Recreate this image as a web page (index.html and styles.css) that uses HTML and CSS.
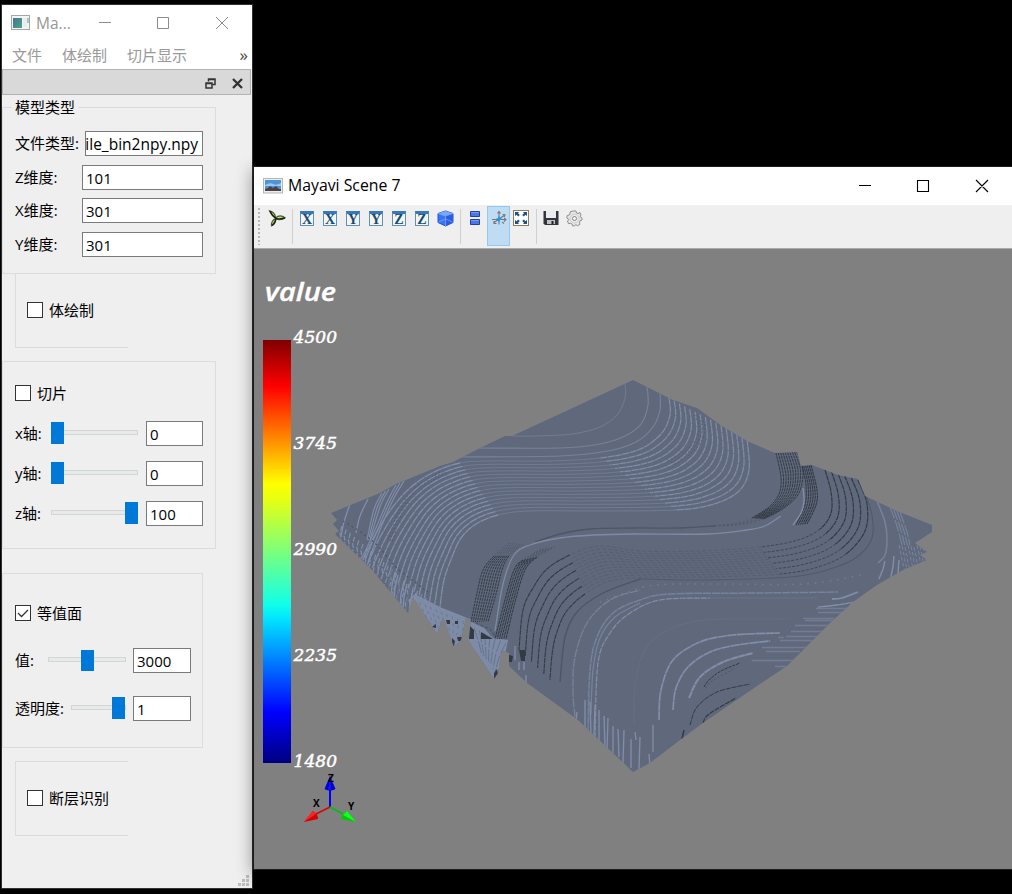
FILE: index.html
```html
<!DOCTYPE html>
<html lang="zh-CN">
<head>
<meta charset="utf-8">
<title>Mayavi Scene 7</title>
<link rel="stylesheet" href="styles.css">
</head>
<body>
<main class="desktop">
  <section class="window controls">
    <header class="titlebar inactive">
      <svg class="app-icon" width="20" height="16" viewBox="0 0 20 16"><defs><linearGradient id="appg" x1="0" y1="0" x2="1" y2="1"><stop offset="0" stop-color="#46739d"/><stop offset="1" stop-color="#4fa57c"/></linearGradient></defs><rect x=".5" y=".5" width="18" height="14" fill="#f4f4f4" stroke="#a3a7a9"/><rect x="2" y="3" width="9" height="10" fill="url(#appg)"/><path d="M13 3v9M15 3v9" stroke="#dde6e6"/><path d="M17 3v5" stroke="#5a9a91"/></svg>
      <span class="title">Ma...</span>
      <svg class="sys" width="132" height="14" viewBox="0 0 132 14"><path d="M1 6.5h12M59.500 1.500h11v11h-11zM118 1l12 12M130 1l-12 12" fill="none" stroke="#8b8b8b"/></svg>
    </header>
    <nav class="menu"><span>文件</span><span>体绘制</span><span>切片显示</span><b>»</b></nav>
    <div class="dock-title">
      <svg width="11" height="11" viewBox="0 0 11 11"><path d="M3.500 3.500V1h6.500v5.500H7.500M3 1.500h7" fill="none" stroke="#333" stroke-width="1.500"/><path d="M1 5h6v5H1zM1 5.500h6" fill="none" stroke="#333" stroke-width="1.500"/></svg>
      <svg width="11" height="11" viewBox="0 0 11 11"><path d="M1 1l9 9M10 1l-9 9" stroke="#333" stroke-width="2.300"/></svg>
    </div>
    <div class="panel">
      <div class="group model">
        <span class="legend">模型类型</span>
        <div class="row"><label>文件类型:</label><div class="input file"><span>file_bin2npy.npy</span></div></div>
        <div class="row"><label>Z维度:</label><div class="input dim">101</div></div>
        <div class="row"><label>X维度:</label><div class="input dim">301</div></div>
        <div class="row"><label>Y维度:</label><div class="input dim">301</div></div>
      </div>
      <div class="group side volume"><div class="check"><i></i>体绘制</div></div>
      <div class="group slices">
        <div class="check"><i></i>切片</div>
        <div class="row"><label>x轴:</label><div class="slider axis"><i></i></div><div class="input small">0</div></div>
        <div class="row"><label>y轴:</label><div class="slider axis"><i></i></div><div class="input small">0</div></div>
        <div class="row"><label>z轴:</label><div class="slider axis end"><i></i></div><div class="input small">100</div></div>
      </div>
      <div class="group iso">
        <div class="check"><i><svg width="14" height="14" viewBox="0 0 14 14"><path d="M2 7l3.500 3.500L12 4" fill="none" stroke="#333" stroke-width="1.300"/></svg></i>等值面</div>
        <div class="row"><label>值:</label><div class="slider value"><i></i></div><div class="input medium">3000</div></div>
        <div class="row"><label>透明度:</label><div class="slider alpha"><i></i></div><div class="input medium">1</div></div>
      </div>
      <div class="group side fault"><div class="check"><i></i>断层识别</div></div>
    </div>
    <svg class="grip" width="12" height="12" viewBox="0 0 12 12"><path d="M8 0h3v3H8zM4 4h3v3H4zM8 4h3v3H8zM0 8h3v3H0zM4 8h3v3H4zM8 8h3v3H8z" fill="#bdbdbd"/></svg>
  </section>

  <section class="window scene">
    <header class="titlebar">
      <svg class="app-icon" width="20" height="16" viewBox="0 0 20 16"><rect x=".5" y=".5" width="19" height="14.500" fill="#eee" stroke="#b5b5b5"/><rect x="2" y="2" width="16" height="11" fill="#4d94d8"/><path d="M2 7q5-3 8-1t8-1v3H2z" fill="#9dc8ec"/><path d="M2 13v-2l3-1 2-2 3 2 3-2 3 3 2 0v2z" fill="#4c4242"/></svg>
      <span class="title">Mayavi Scene 7</span>
      <svg class="sys" width="132" height="14" viewBox="0 0 132 14"><path d="M1 6.500h12M59.500 1.500h11v11h-11zM118 1l12 12M130 1l-12 12" fill="none" stroke="#000" stroke-width="1.100"/></svg>
    </header>
    <div class="toolbar">
      <div class="handle"></div>
      <div class="tool"><svg width="18" height="17" viewBox="0 0 18 17"><path d="M1.500 .8Q7 2 7.500 7.500 4 6 1.500.8zM7.500 8Q12 4 17 7.800 12 11 7.500 8.500zM7.500 8.500Q8 14 3.500 15.800 3 11 7.500 8.500z" fill="#c9d67a" stroke="#46592c" stroke-width="1.200"/><path d="M2 1Q4 6 8 8.300 12 9.500 17 8M8 8q0 4-4 7.500" fill="none" stroke="#192217" stroke-width="1.400"/></svg></div>
      <div class="sep"></div>
      <div class="tool"><span class="axis-icon">X</span></div>
      <div class="tool"><span class="axis-icon">X</span></div>
      <div class="tool"><span class="axis-icon">Y</span></div>
      <div class="tool"><span class="axis-icon">Y</span></div>
      <div class="tool"><span class="axis-icon">Z</span></div>
      <div class="tool"><span class="axis-icon">Z</span></div>
      <div class="tool"><svg width="17" height="17" viewBox="0 0 17 17"><path d="M1 3.500L8.500 1 16 3.500V12.500L8.500 16 1 12.500z" fill="#3974f2" stroke="#2356cf"/><path d="M1 3.500L8.500 1 16 3.500 8.500 6z" fill="#7da8ff"/><path d="M8.500 6L16 3.500V12.500L8.500 16z" fill="#2c5ddd"/><path d="M8.500 6v10M1 3.500L8.500 6 16 3.500M1.500 12L8.500 9l7 3" fill="none" stroke="#82a9ff" stroke-width=".7"/></svg></div>
      <div class="sep"></div>
      <div class="tool"><svg width="16" height="16" viewBox="0 0 16 16"><path d="M3.500 1.500h9v5h-9zM3.500 9.500h9v5h-9z" fill="#4778e4" stroke="#203fa2"/><path d="M4 2.500h8M4 10.500h8" stroke="#739cf5"/></svg></div>
      <div class="tool active"><svg width="16" height="16" viewBox="0 0 16 16"><path d="M8 14.500V2M6.500 3.500L8 1.500l1.500 2M2.500 13L13 5.500M1 9.500h14M11.500 4.500l2.500.3-.8 2.200M3 11v2.500h2.500M13 8l2 1.500-2 2M11 12l2 1.500" fill="none" stroke="#77797a" stroke-width="1.100"/><path d="M8 5.500l1 2.500 2.500 1-2.500 1-1 2.500L7 10 4.500 9 7 8z" fill="#1d97f4"/></svg></div>
      <div class="tool"><svg width="16" height="16" viewBox="0 0 16 16"><rect x=".5" y=".5" width="15" height="15" fill="#fff" stroke="#8a7d62"/><path d="M2 2h4L5 3.300l1.800 1.700L5.200 6.500l-1.700-1.700L2 6zM14 2v4l-1.500-1.200-1.700 1.700L9.200 5 11 3.300 10 2zM2 14v-4l1.500 1.200 1.700-1.700L6.800 11 5 12.700 6 14zM14 14h-4l1-1.300L9.200 11l1.600-1.500 1.700 1.700L14 10z" fill="#1e5286"/></svg></div>
      <div class="sep"></div>
      <div class="tool"><svg width="16" height="16" viewBox="0 0 16 16"><path d="M.5 1h15v14H2L.5 13.500z" fill="#34343b"/><path d="M3 1h10v7H3z" fill="#e9edf2"/><path d="M4 10h8v4H4z" fill="#bcc2c8"/><path d="M8.500 11h2v3h-2z" fill="#222"/></svg></div>
      <div class="tool"><svg width="17" height="17" viewBox="0 0 17 17"><path d="M7 1h3l.5 2 1.500.6L14 2.500 15 5l-1 1.500L16 8v2l-2 .8-.5 1.500.5 2-2.500 1.500-1.800-1.300L8.500 16l-2-.2L6 14l-1.500-.6-2 .3L1.500 11 3 9.500.8 8 1.200 5.500l2-.4L4 4 4 2l2-.7z" fill="#e7e7e7" stroke="#8f8f8f"/><circle cx="8.500" cy="8.500" r="2" fill="#f4f4f4" stroke="#888"/><circle cx="8.500" cy="8.500" r="4.500" fill="none" stroke="#cfcfcf"/></svg></div>
    </div>
    <div class="viewport">
      <svg id="view" width="758" height="620" viewBox="254 249 758 620">
        <defs>
          <clipPath id="outline"><path d="M633 380L647 387 673 400 697 408 722 426 747 441 775 453 797 452 801 466 812 465 838 475 858 479 865 496 897 511 932 525 932 532 915 543 927 552 920 555 927 560 903 570 877 585 853 602 830 623 787 666 757 686 703 723 680 740 650 763 633 772 578 720 527 683 509 666 509 653 502 650 498 673 494 679 468 640 471 621 466 618 461 640 454 647 443 617 437 634 413 597 408 613 372 570 335 534 339 531 333 524 337 520 331 513 380 493 396 484 440 466 453 462 480 448 505 436 512 436z"/></clipPath>
          <linearGradient id="jet" x1="0" y1="0" x2="0" y2="1"><stop offset="0" stop-color="#800000"/><stop offset=".11" stop-color="#f00"/><stop offset=".34" stop-color="#ff0"/><stop offset=".375" stop-color="#e8ff10"/><stop offset=".625" stop-color="#10ffe8"/><stop offset=".66" stop-color="#00e4ff"/><stop offset=".88" stop-color="#00f"/><stop offset="1" stop-color="#000080"/></linearGradient>
        </defs>
        <g clip-path="url(#outline)"><rect x="320" y="370" width="630" height="410" fill="#60697c"/><path d="M408 600L415 594 440 607 470 619 472 622 484 628 493 638 508 640 505 655 494 680 460 650 420 630z" fill="#7e8ba7"/><g id="contours" fill="none"></g></g>
        <rect x="263" y="340" width="28" height="423" fill="url(#jet)"/>
        <text class="bar-title" x="265" y="301" textLength="71" lengthAdjust="spacingAndGlyphs">value</text>
        <g class="bar-label"><text x="293.500" y="343" textLength="43.500">4500</text><text x="293.500" y="449" textLength="43.500">3745</text><text x="293.500" y="555" textLength="43.500">2990</text><text x="293.500" y="661" textLength="43.500">2235</text><text x="293.500" y="767" textLength="43.500">1480</text></g>
        <path d="M330 807V789" stroke="#00f" stroke-width="2"/><path d="M330 807L316 814" stroke="#e00000" stroke-width="1.500"/><path d="M330 807L343 814" stroke="#00c000" stroke-width="1.500"/>
        <path d="M330 776L335.500 789q-5.500 3.500-11 0z" fill="#00c"/><path d="M330 776L331 790h-3z" fill="#11f"/>
        <path d="M304 822L313 811q5 3 5 8z" fill="#d80000"/><path d="M304 822L313 811l3 3z" fill="#f22"/>
        <path d="M356 822L347 811q-5 3-6 8z" fill="#00c900"/><path d="M356 822L347 811l-4 4z" fill="#1f2"/>
        <g class="axis-label"><text x="328" y="782">Z</text><text x="313" y="807">X</text><text x="348" y="810">Y</text></g>
      </svg>
    </div>
  </section>
</main>
<script src="surface.js"></script>
</body>
</html>
```
FILE: surface.js
```js
const layer = document.getElementById('contours');
const LIGHT = '#818eaa', MID = '#75829b', DARK = '#323a44', DIM = '#4d5665';

// Catmull-Rom spline through points from..to, as a path string.
function spline(p, from = 0, to = p.length - 1) {
  let d = `M${p[from]}`;
  for (let i = from; i < to; i++) {
    const a = p[i - 1] || p[i], b = p[i], c = p[i + 1], e = p[i + 2] || c;
    d += `C${b[0] + (c[0] - a[0]) / 6} ${b[1] + (c[1] - a[1]) / 6} ${c[0] - (e[0] - b[0]) / 6} ${c[1] - (e[1] - b[1]) / 6} ${c}`;
  }
  return d;
}
function draw(d, color, width = 1.2, dash = '', opacity = 1, fill = 'none') {
  const el = document.createElementNS('http://www.w3.org/2000/svg', 'path');
  el.setAttribute('d', d);
  el.setAttribute('stroke', color);
  el.setAttribute('stroke-width', width);
  el.setAttribute('stroke-dasharray', dash);
  el.setAttribute('opacity', opacity);
  el.setAttribute('fill', fill);
  layer.append(el);
}
const pts = s => s.split(' ').map(v => v.split(',').map(Number));
const curve = (s, ...style) => draw(spline(pts(s)), ...style);
// n point lists evenly spread from curve a to curve b.
function between(a, b, n) {
  const p = pts(a), q = pts(b);
  return Array.from({ length: n }, (_, i) => {
    const t = n > 1 ? i / (n - 1) : 0;
    return p.map((v, k) => [v[0] + (q[k][0] - v[0]) * t, v[1] + (q[k][1] - v[1]) * t]);
  });
}
const family = (a, b, n, ...style) => between(a, b, n).forEach(p => draw(spline(p), ...style));

// Upper light contours
curve('625,383 625,398 617,415 600,427 572,434 535,436 512,436', MID, 1, '', .8);
curve('647,386 648,405 641,424 625,436 600,444 560,448 475,448', MID, 1.2);
curve('660,393 660,410 653,427 636,442 608,451 560,456 450,457', MID, 1.2);
between('669,398 670,415 661,434 638,450 600,458 550,461 490,461 460,463 432,473 410,488 392,508 375,535 362,562',
        '747,439 749,470 739,491 714,504 675,510 600,511 530,511 498,515 476,524 461,538 452,557 444,580 440,607', 16)
  .forEach(p => {
    draw(spline(p, 4, 7), MID, 1, '', .75);
    draw(spline(p, 0, 4), LIGHT, 1.25, '7 .6', .95);
    draw(spline(p, 7, 12), LIGHT, 1.3, '9 .6');
  });
family('695,415 699,430 690,447 666,462', '702,417 705,431 696,449 672,466', 3, DIM, .9, '1.500 2.500', .8);
family('396,485 388,500 375,530 362,558', '404,481 393,500 380,530 368,562', 3, LIGHT, 1.1);
curve('350,504 344,522 341,537', LIGHT, 1.3);
curve('368,499 360,516 356,533', LIGHT, 1.3);
family('382,493 374,509 367,540', '389,489 380,507 370,540', 3, LIGHT, 1.1);
family('440,472 416,487 400,508 388,540', '446,473 424,487 404,509 392,543', 3, DIM, .8, '2 2', .8);
curve('343,521 362,533 379,547 397,568 428,592', DIM, 1.2, '2 3');

// Ragged left edge
for (let i = 0; i < 23; i++) {
  const x = 342 + i * 4.2, y = 526 + i * 3.6;
  draw(`M${x} ${y}l-2 7l1 5l-3 8l1 5l-3 10`, LIGHT, 1.25, '5 1.5');
}
for (let i = 0; i < 9; i++) draw(`M${392 + i * 3} ${569 + i * 3}l-3 13l-2 26`, i % 3 ? LIGHT : '#687389', 1.4);
family('414,600 420,612 428,624', '463,621 463,628 460,637', 10, '#6c7990', 1, '3 4');
family('474,628 478,640 482,655', '506,643 500,655 495,672', 7, '#66738a', 1, '12 2');
draw('M432 627l4-3v4zM446 620h4v4h-3zM455 621h3v3h-3zM452 638l3 3-1 5h-2zM457 637h5v4h-4z', 'none', 0, '', 1, DARK);
draw('M470 626l4 4v9h-5zM481 632l12 7h-12zM509 655l4 1-1 6h-3zM519 650h6v11h-4zM494 673l3-4 1 6-4 4z', 'none', 0, '', 1, DARK);

// Dark bands
family('776,453 781,477 779,494 769,507 752,518', '797,452 803,470 799,493 784,508 764,519', 10, DARK, 1, '3 .6');
family('752,518 738,523 710,526', '764,519 745,524 722,526', 4, DIM, .8, '2 2', .8);
curve('715,526 680,528 633,528 590,529 560,534 535,542', DIM, 1.3);
family('802,466 806,485 805,505 796,525', '811,465 817,490 816,505 807,524', 6, DARK, 1.1, '3 .5');
curve('803,488 804,501 801,513 793,525', LIGHT, 1.4);
curve('781,516 765,526 747,530 707,534 633,534 593,535 560,538 530,545 514,555 503,584 495,631', LIGHT, 1.3, '', .9);
between('509,543 494,556 483,570 477,593 471,622', '524,545 509,556 502,570 496,594 488,622', 9)
  .forEach(p => {
    draw(spline(p, 0, 1), DIM, .9, '1.500 2');
    draw(spline(p, 1, 4), DARK, 1, '2.500 .8');
  });
between('541,549 523,560 514,570 505,600 495,639', '555,547 537,557 525,570 515,602 506,639', 6)
  .forEach(p => {
    draw(spline(p, 0, 1), DIM, .9, '2 1.500');
    draw(spline(p, 1, 4), DARK, 1.05, '3 .7');
  });
draw('M476 623l14 6 6 8', '#4e5868', 1.5, '3 2');

// Central dark contours: strong on both flanks, faint across the flat
const coreIn = '825,470 831,492 831,513 820,529 798,540 760,547 700,551 640,551 600,546 570,555 547,569 533,588 523,610 519,650';
const coreOut = '858,480 867,504 865,531 846,554 818,567 780,574 710,577 650,577 610,581 585,594 566,612 556,635 552,655 550,680';
between(coreIn, coreOut, 6).forEach(p => {
  draw(spline(p, 0, 3), DARK, 1.2, '5 .6');
  draw(spline(p, 3, 5), DARK, .9, '3 1.500', .8);
  draw(spline(p, 9, 13), DARK, 1.1, '5 .6');
});
between(coreIn, coreOut, 12).forEach(p => draw(spline(p, 5, 9), DIM, .8, '4 2', .65));
curve('865,493 872,515 872,538 857,557 830,569 790,577 700,580 640,579', DIM, 1.1, '', .8);
curve('640,579 603,593 577,612 565,637 560,682', DIM, 1.4);

// Lower light contours
curve('575,717 573,690 575,657 587,623 610,600 640,590', MID, 1.3, '9 1');
curve('600,602 625,593 655,585 720,584 805,584 862,575', MID, 1.5, '1.5 6', .8);
curve('588,733 590,670 597,637 613,613 640,600 670,594 760,593 838,592', MID, 1.5, '8 .8');
curve('591,715 593,670 600,638 615,617 640,603', MID, 1.3);
curve('595,738 598,663 610,633 630,613 660,600 710,598', LIGHT, 1.2, '6 1');
curve('710,598 817,598', MID, .7, '', .6);
curve('659,720 661,690 673,660 700,642 733,635 780,633', LIGHT, 1.7, '9 .5');
curve('673,710 676,688 688,667 710,652 737,645 770,641', LIGHT, 1.7, '9 .5');
curve('689,698 700,677 723,662 753,653', LIGHT, 2, '7 .5');
curve('634,725 635,685 645,650 666,631 705,620 790,619', '#647085', 1);
curve('704,687 709,680 721,671 740,663', DARK, 1, '3 1');
curve('706,688 712,681 734,669', DIM, .9, '2 2');
curve('690,725 697,707 717,692 750,684', DARK, 1, '5 1');
curve('703,723 709,714 736,698', DARK, 1.2, '5 1');
draw('M682 739l2-9', DARK, 1.5);
// Short horizontal ledges: start x, end x, y
[[752,795,660],[775,790,666],[766,800,651],[762,808,647],[778,784,637],[786,820,636],[780,812,640],[791,832,631],[795,838,625],[803,834,618],[805,842,620],[818,850,612],[816,855,608]].forEach(([a, b, y]) => draw(`M${a} ${y + .5}H${b}`, '#707d95', 1.3));
curve('832,599 842,598 858,592', LIGHT, 1.8);
curve('818,607 837,605 855,602', LIGHT, 1.4);

// Right tip
curve('877,501 885,522 887,540 885,555 878,563', MID, 1.6);
family('890,507 897,526 902,545', '900,512 907,532 910,545', 4, MID, 1.2, '12 2');
for (let i = 0; i < 10; i++) draw(`M${899 + i * 3} ${545 + i % 3}l2 9l1 7l3 9`, MID, 1.1, '4 2');
draw('M885 561l-2 8l-4 10M894 556l-1 11l-3 14M899 560l-1 14', LIGHT, 1.4);

// Bottom edge teeth: x, top, bottom
[[577,712,722],[585,700,727],[590,702,734],[595,705,736],[599,710,742],[604,716,746],[608,718,750],[613,726,753],[618,729,757],[624,730,763],[631,739,768],[635,732,740],[640,737,769],[653,725,752],[649,754,766]].forEach(([x, a, b], i) => draw(`M${x} ${a}L${x + (i % 3 - 1)} ${b}`, LIGHT, 1.3));
draw('M515 646v14M519 662v8M526 675v9M524 662v8', LIGHT, 1.3);
```
FILE: styles.css
```css
* { box-sizing: border-box; }
body { margin: 0; background: #000; font: 15px/20px "Open Sans", "Noto Sans CJK SC", sans-serif; color: #000; }
svg { display: block; flex: none; }
.desktop { position: relative; width: 1012px; height: 894px; overflow: hidden; background: #000; }
.window { position: absolute; }
.controls { left: 1px; top: 4px; width: 252px; height: 885px; border: 1px solid #303030; background: #efefef; display: flex; flex-direction: column; }
.scene { left: 254px; top: 167px; width: 758px; height: 702px; background: #efefef; box-shadow: 0 0 0 1px #1b1b1b, 0 4px 16px 1px rgba(0, 0, 0, .42); display: flex; flex-direction: column; }
.titlebar { height: 38px; background: #fff; display: flex; align-items: center; padding-left: 9px; font-size: 15.8px; flex: none; }
.title { margin-left: 5px; margin-top: -2px; }
.sys { margin-left: auto; margin-right: 22px; }
.inactive { color: #969696; height: 36px; }
.inactive .title { font-size: 15.5px; margin-top: 0; }
.inactive .sys { margin-right: 22px; }
.menu { height: 28px; background: #fff; color: #999; display: flex; align-items: center; gap: 20px; padding: 0 4px 0 10px; flex: none; }
.menu b { margin-left: auto; color: #444; font-weight: 400; font-size: 17px; }
.dock-title { height: 26px; flex: none; border: 1px solid #b3b3b3; background: #d9d9d9; display: flex; align-items: center; justify-content: flex-end; gap: 16px; padding: 2px 7px 0 0; margin: 0 1px 1px 0; }
.panel { display: flex; flex-direction: column; align-items: flex-start; padding-top: 11px; }
.group { position: relative; border: 1px solid #dcdcdc; display: flex; flex-direction: column; }
.legend { position: absolute; left: 9px; top: -11px; padding: 0 3px; background: #efefef; line-height: 20px; }
.row { display: flex; align-items: center; justify-content: space-between; height: 25px; flex: none; }
.row label { margin-top: -1px; }
.input { height: 25px; border: 1px solid #7a7a7a; background: #fff; padding: 2px 0 0 3px; line-height: 21px; overflow: hidden; white-space: nowrap; }
.file { width: 118px; padding: 2px 4px 0 0; display: flex; justify-content: flex-end; font-size: 15.5px; }
.dim { width: 121px; }
.small { width: 57px; }
.medium { width: 58px; }
.model { width: 214px; height: 167px; padding: 23px 12px 0 12px; gap: 8.67px; }
.side { margin-left: 13px; width: 113px; border-right: 0; padding-left: 11px; justify-content: center; }
.volume { height: 75px; border-top: 0; margin-top: -1px; }
.check { display: flex; align-items: center; gap: 6px; height: 20px; flex: none; }
.check i { width: 16px; height: 16px; border: 1px solid #333; background: #fff; }
.slices { margin-top: 13px; width: 214px; height: 188px; padding: 21px 12px 0 12px; }
.slices .row { margin-top: 15px; }
.slices .check + .row { margin-top: 18px; }
.slider { position: relative; height: 5px; background: #e7eaea; border: 1px solid #d4d6d6; margin-top: -3px; margin-left: auto; margin-right: 8px; }
.slider i { position: absolute; top: -9px; left: -1px; width: 13px; height: 22px; background: #0078d7; }
.axis { width: 87px; }
.end i { left: auto; right: -1px; }
.value { width: 78px; }
.value i { left: 32px; height: 21px; top: -8px; }
.alpha { width: 55px; }
.alpha i { left: 40px; }
.iso .slider { margin-right: 7px; }
.iso { margin-top: 24px; width: 201px; height: 175px; padding: 29px 11px 0 12px; }
.iso .check + .row { margin-top: 25px; }
.iso .row + .row { margin-top: 23px; }
.fault { margin-top: 13px; height: 75px; padding-bottom: 1px; }
.grip { position: absolute; right: 2px; bottom: 1px; }
.toolbar { height: 44px; display: flex; border-bottom: 1px solid #aaa; background: #efefef; padding: 1px 0 0 4px; flex: none; }
.handle { width: 2px; height: 37px; margin: 2px 6px 0 0; background: repeating-linear-gradient(#b8b8b8 0 2px, transparent 2px 4px); }
.tool { width: 23px; height: 40px; padding: 4px 1px 0 0; display: flex; justify-content: center; align-items: flex-start; flex: none; }
.active { background: #c0dcf3; border: 1px solid #90c8f6; padding: 3px 0 0; }
.sep { width: 1px; height: 35px; margin: 3px 3px 0; background: #d0d0d0; }
.axis-icon { width: 14px; height: 15px; margin-top: 1px; border: 1px solid #608fb9; border-top: 3px solid #3778b6; background: #f3f6ed; color: #174a79; font: bold 14px/11px "Liberation Serif", serif; display: flex; justify-content: center; }
.viewport { flex: 1; background: #808080; min-height: 0; }
.bar-title { font: italic 600 26px "Open Sans", sans-serif; fill: #fff; stroke: #fff; stroke-width: .4px; }
.bar-label { font: italic 17px "DejaVu Serif", serif; fill: #fff; stroke: #fff; stroke-width: .5px; }
.axis-label { font: bold 10px "Open Sans", sans-serif; fill: #000; }
```
